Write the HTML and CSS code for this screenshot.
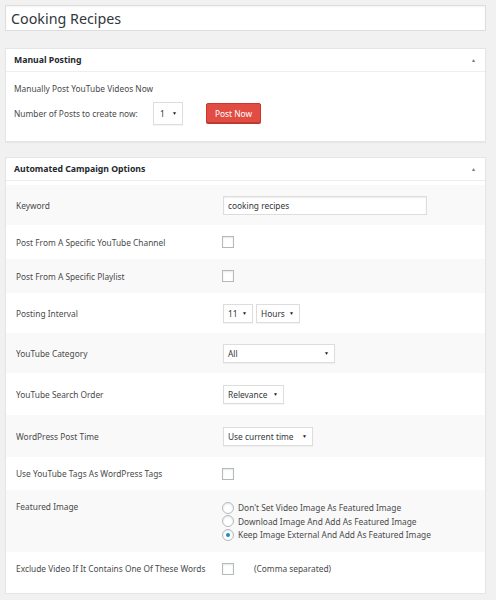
FILE: index.html
```html
<!DOCTYPE html>
<html>
<head>
<meta charset="utf-8">
<link rel="stylesheet" href="styles.css">
</head>
<body>
<div class="page">
  <div class="title-box">Cooking Recipes</div>

  <div class="panel panel-manual">
    <div class="panel-header"><span>Manual Posting</span><span class="toggle">&#9650;</span></div>
    <div class="manual-body">
      <div class="manual-line">Manually Post YouTube Videos Now</div>
      <div class="manual-row">
        <span class="manual-label">Number of Posts to create now:</span>
        <span class="select sel-num"><span>1</span><span class="arrow">&#9660;</span></span>
        <span class="btn-red">Post Now</span>
      </div>
    </div>
  </div>

  <div class="panel panel-auto">
    <div class="panel-header"><span>Automated Campaign Options</span><span class="toggle">&#9650;</span></div>
    <div class="rows">
      <div class="row alt h40">
        <div class="label">Keyword</div>
        <div class="ctrl"><span class="text-input">cooking recipes</span></div>
      </div>
      <div class="row h34">
        <div class="label">Post From A Specific YouTube Channel</div>
        <div class="ctrl"><span class="checkbox"></span></div>
      </div>
      <div class="row alt h34">
        <div class="label">Post From A Specific Playlist</div>
        <div class="ctrl"><span class="checkbox"></span></div>
      </div>
      <div class="row h40">
        <div class="label">Posting Interval</div>
        <div class="ctrl ctrl-gap">
          <span class="select sel-11"><span>11</span><span class="arrow">&#9660;</span></span>
          <span class="select sel-hours"><span>Hours</span><span class="arrow">&#9660;</span></span>
        </div>
      </div>
      <div class="row alt h40">
        <div class="label">YouTube Category</div>
        <div class="ctrl"><span class="select sel-all"><span>All</span><span class="arrow">&#9660;</span></span></div>
      </div>
      <div class="row h42">
        <div class="label">YouTube Search Order</div>
        <div class="ctrl"><span class="select sel-rel"><span>Relevance</span><span class="arrow">&#9660;</span></span></div>
      </div>
      <div class="row alt h42">
        <div class="label">WordPress Post Time</div>
        <div class="ctrl"><span class="select sel-time"><span>Use current time</span><span class="arrow">&#9660;</span></span></div>
      </div>
      <div class="row h33">
        <div class="label">Use YouTube Tags As WordPress Tags</div>
        <div class="ctrl"><span class="checkbox"></span></div>
      </div>
      <div class="row alt row-top">
        <div class="label">Featured Image</div>
        <div class="ctrl radios">
          <div class="radio-line"><span class="radio"></span><span>Don't Set Video Image As Featured Image</span></div>
          <div class="radio-line"><span class="radio"></span><span>Download Image And Add As Featured Image</span></div>
          <div class="radio-line"><span class="radio checked"></span><span>Keep Image External And Add As Featured Image</span></div>
        </div>
      </div>
      <div class="row h33 last">
        <div class="label">Exclude Video If It Contains One Of These Words</div>
        <div class="ctrl"><span class="checkbox"></span><span class="note">(Comma separated)</span></div>
      </div>
    </div>
  </div>
</div>
</body>
</html>
```

FILE: styles.css
```css
* { box-sizing: border-box; }
html, body { margin: 0; padding: 0; }
body {
  background: #f1f1f1;
  font-family: "Noto Sans", "Open Sans", sans-serif;
  font-size: 8.35px;
  color: #4a4a4a;
  white-space: nowrap;
}
.page {
  padding: 5px 5px 0 5px;
  width: 491px;
}
.title-box {
  height: 26px;
  background: #fff;
  border: 1px solid #ddd;
  box-shadow: inset 0 1px 2px rgba(0,0,0,0.05);
  font-size: 14.3px;
  color: #32373c;
  padding-left: 5px;
  line-height: 25px;
}
.panel {
  background: #fff;
  border: 1px solid #e5e5e5;
  box-shadow: 0 1px 1px rgba(0,0,0,0.04);
}
.panel-manual {
  margin-top: 17px;
  height: 94px;
}
.panel-auto {
  margin-top: 15px;
}
.panel-header {
  height: 23px;
  border-bottom: 1px solid #eee;
  display: flex;
  align-items: center;
  justify-content: space-between;
  padding: 0 9px 0 8px;
  font-weight: bold;
  font-size: 8.7px;
  color: #23282d;
}
.toggle {
  font-size: 5px;
  color: #72777c;
  font-weight: normal;
}
.manual-body {
  padding: 10px 8px 0 8px;
}
.manual-line {
  height: 14px;
  line-height: 14px;
}
.manual-row {
  display: flex;
  align-items: center;
  margin-top: 4px;
  height: 26px;
}
.manual-label {
  width: 139px;
  flex: none;
}
.select {
  display: inline-flex;
  align-items: center;
  justify-content: space-between;
  height: 20px;
  border: 1px solid #ddd;
  background: #fff;
  padding: 0 5px 0 4px;
  color: #32373c;
  box-shadow: 0 1px 1px rgba(0,0,0,0.04);
}
.arrow {
  font-size: 5px;
  color: #222;
}
.sel-num { width: 30px; height: 23px; padding-left: 6px; }
.btn-red {
  margin-left: 23px;
  height: 20px;
  width: 55px;
  background: #e14d43;
  border: 1px solid #c8382e;
  border-radius: 2px;
  color: #fff;
  display: inline-flex;
  align-items: center;
  justify-content: center;
  box-shadow: 0 1px 0 #b73a31;
}
.rows {
  padding: 4px 0 8px 0;
}
.row {
  display: flex;
  align-items: center;
  padding-left: 10px;
}
.row.alt { background: #f9f9f9; }
.h40 { height: 40px; }
.h34 { height: 34px; }
.h42 { height: 42px; }
.h33 { height: 33px; }
.row-top {
  align-items: flex-start;
  height: 62px;
  padding-top: 11px;
}
.label {
  width: 207px;
  flex: none;
}
.ctrl {
  display: flex;
  align-items: center;
}
.ctrl-gap { gap: 3px; }
.text-input {
  width: 204px;
  height: 19px;
  border: 1px solid #ddd;
  background: #fff;
  padding-left: 4px;
  display: flex;
  align-items: center;
  color: #32373c;
  box-shadow: inset 0 1px 2px rgba(0,0,0,0.07);
}
.checkbox {
  width: 12px;
  height: 12px;
  border: 1px solid #b4b9be;
  background: #fff;
  box-shadow: inset 0 1px 2px rgba(0,0,0,0.1);
  margin-left: -1px;
}
.sel-11 { width: 30px; height: 19px; }
.sel-hours { width: 44px; height: 19px; }
.sel-all { width: 112px; height: 19px; }
.sel-rel { width: 61px; height: 19px; }
.sel-time { width: 90px; height: 19px; }
.radios {
  flex-direction: column;
  align-items: flex-start;
  margin-left: -1px;
}
.radio-line {
  display: flex;
  align-items: center;
  height: 13.5px;
  gap: 4px;
}
.radio {
  width: 12px;
  height: 12px;
  border-radius: 50%;
  border: 1px solid #b4b9be;
  background: #fff;
  box-shadow: inset 0 1px 2px rgba(0,0,0,0.1);
  display: flex;
  align-items: center;
  justify-content: center;
}
.radio.checked::after {
  content: "";
  width: 4px;
  height: 4px;
  border-radius: 50%;
  background: #1e8cbe;
}
.note {
  margin-left: 20px;
}
```
